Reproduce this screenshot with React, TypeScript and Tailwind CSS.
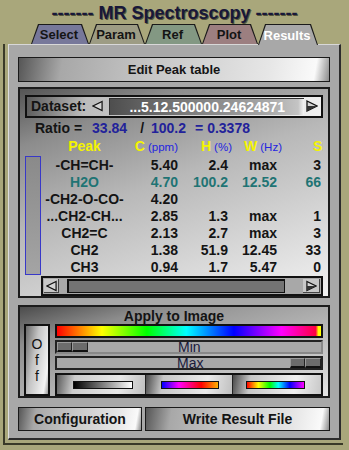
import React from "react";

const FONT = "font-['Liberation_Sans',Arial,sans-serif]";
const BEVEL =
  "bg-[linear-gradient(100deg,#565656_0%,#a8a8a8_14%,#c8c8c8_45%,#e6e6e6_80%,#fafafa_95%,#8a8a8a_100%)]";

function ArrowL({ w = 12 }: { w?: number }) {
  return (
    <svg width={w} height="12" viewBox="0 0 12 12">
      <polygon points="11,1 1,6 11,11" fill="#d4d4d4" stroke="#111" strokeWidth="1.3" strokeLinejoin="miter" />
    </svg>
  );
}
function ArrowR({ w = 12 }: { w?: number }) {
  return (
    <svg width={w} height="12" viewBox="0 0 12 12">
      <polygon points="1,1 11,6 1,11" fill="#d4d4d4" stroke="#111" strokeWidth="1.3" />
      <polygon points="1,6 11,6 1,11" fill="#333" />
    </svg>
  );
}

type Tab = { label: string; w: string; bg: string; active?: boolean };
const tabs: Tab[] = [
  { label: "Select", w: "w-[58px]", bg: "bg-[#77789a]" },
  { label: "Param", w: "w-[56px]", bg: "bg-[#9d9c84]" },
  { label: "Ref", w: "w-[57px]", bg: "bg-[#839883]" },
  { label: "Plot", w: "w-[56px]", bg: "bg-[#9c7f80]" },
  { label: "Results", w: "w-[60px]", bg: "bg-[#a8a8a8]", active: true },
];

const rows = [
  { n: "-CH=CH-", c: "5.40", h: "2.4", w: "max", s: "3" },
  { n: "H2O", c: "4.70", h: "100.2", w: "12.52", s: "66", teal: true },
  { n: "-CH2-O-CO-", c: "4.20", h: "", w: "", s: "" },
  { n: "...CH2-CH...", c: "2.85", h: "1.3", w: "max", s: "1" },
  { n: "CH2=C", c: "2.13", h: "2.7", w: "max", s: "3" },
  { n: "CH2", c: "1.38", h: "51.9", w: "12.45", s: "33" },
  { n: "CH3", c: "0.94", h: "1.7", w: "5.47", s: "0" },
];

function Thumb() {
  return (
    <div className="flex h-full">
      <div className="w-[15px] h-full bg-[#6c6c6c] border-t border-l border-t-[#9a9a9a] border-l-[#9a9a9a] border-b-2 border-r border-b-[#111] border-r-[#222]" />
      <div className="w-[16px] h-full bg-[#6c6c6c] border-t border-l border-t-[#9a9a9a] border-l-[#9a9a9a] border-b-2 border-r border-b-[#111] border-r-[#222]" />
    </div>
  );
}

export default function App() {
  return (
    <div className={`${FONT} w-[349px] h-[450px] bg-[#a9a77b] overflow-hidden`}>
      {/* title */}
      <div className="h-[24px] flex items-center justify-center pt-[2px]">
        <span className="text-[18px] font-bold text-[#18183a] leading-none [text-shadow:1px_1px_0_#55553a]">
          ------- MR Spectroscopy -------
        </span>
      </div>
      {/* tabs */}
      <div className="h-[20px] flex items-end pl-[31px] relative z-10">
        {tabs.map((t) => (
          <div
            key={t.label}
            className={`${t.w} h-[20px] ${t.active ? "h-[21px] -mb-[1px]" : ""} bg-[#1a1a1a] pt-[1px] px-[1px] [clip-path:polygon(7px_0,calc(100%-7px)_0,100%_100%,0_100%)]`}
          >
            <div
              className={`h-full ${t.bg} [clip-path:polygon(7px_0,calc(100%-7px)_0,100%_100%,0_100%)] flex items-center justify-center pl-[2px] pr-[4px]`}
            >
              <span
                className={`text-[13px] font-bold leading-none ${t.active ? "text-white" : "text-[#141414]"}`}
              >
                {t.label}
              </span>
            </div>
          </div>
        ))}
      </div>
      {/* frame */}
      <div className="ml-[3px] w-[340px] border-l-2 border-b-2 border-[#3a3a28] pl-[3px] pb-[3px]">
        <div className="w-[333px] h-[396px] bg-[#a8a8a8] border-t border-l border-t-[#d8d8d8] border-l-[#dcdcdc] border-r-2 border-b-2 border-r-[#2c2c2c] border-b-[#2c2c2c] pl-[9px] pt-[12px]">
          <div className="w-[312px] flex flex-col">
            {/* Edit Peak table */}
            <div
              className={`h-[25px] ${BEVEL} border border-[#1a1a1a] flex items-center justify-center text-[13px] font-bold text-[#141414]`}
            >
              Edit Peak table
            </div>

            {/* dataset panel */}
            <div className="mt-[5px] h-[211px] border-2 border-[#1c1c1c] bg-[linear-gradient(160deg,#555_0%,#8c8c8c_18%,#b8b8b8_45%,#d8d8d8_75%,#f2f2f2_100%)] px-[5px] pt-[6px] flex flex-col">
              <div className="h-[23px] border-2 border-[#111] bg-[linear-gradient(100deg,#5a5a5a_0%,#bcbcbc_20%,#d6d6d6_60%,#f0f0f0_100%)] flex items-center">
                <span className="ml-[4px] text-[14px] font-bold text-[#141414] leading-none">Dataset:</span>
                <span className="ml-[6px] flex items-center">
                  <ArrowL w={11} />
                </span>
                <div className="ml-[6px] w-[195px] h-[17px] bg-[linear-gradient(90deg,#4e4e4e_0%,#7c7c7c_40%,#a6a6a6_80%,#c4c4c4_97%,#f4f4f4_100%)] border-t border-l border-[#333] flex items-center justify-center">
                  <span className="text-[14px] font-bold text-white leading-none">...5.12.500000.24624871</span>
                </div>
                <span className="ml-[2px] flex items-center">
                  <ArrowR w={12} />
                </span>
              </div>

              {/* ratio */}
              <div className="h-[19px] flex items-center text-[14px] font-bold leading-none mt-[1px]">
                <span className="ml-[10px] text-[#141414]">Ratio =</span>
                <span className="ml-[10px] text-[#22229a]">33.84</span>
                <span className="ml-[13px] text-[#141414]">/</span>
                <span className="ml-[7px] text-[#22229a]">100.2</span>
                <span className="ml-[9px] text-[#22229a]">= 0.3378</span>
              </div>

              {/* header */}
              <div className="h-[18px] flex items-center ml-[16px] overflow-hidden leading-none">
                <div className="w-[87px] shrink-0 text-center text-[14px] font-bold text-[#f4f400]">Peak</div>
                <div className="w-[50px] shrink-0 text-right whitespace-nowrap">
                  <span className="text-[14px] font-bold text-[#f4f400]">C</span>
                  <span className="ml-[3px] text-[11.5px] text-[#2424e0]">(ppm)</span>
                </div>
                <div className="w-[54px] shrink-0 text-right whitespace-nowrap">
                  <span className="text-[14px] font-bold text-[#f4f400]">H</span>
                  <span className="ml-[3px] text-[11.5px] text-[#2424e0]">(%)</span>
                </div>
                <div className="w-[50px] shrink-0 text-right whitespace-nowrap">
                  <span className="text-[14px] font-bold text-[#f4f400]">W</span>
                  <span className="ml-[3px] text-[11.5px] text-[#2424e0]">(Hz)</span>
                </div>
                <div className="shrink-0 pl-[31px] text-[14px] font-bold text-[#f4f400] whitespace-nowrap">Si</div>
              </div>

              {/* body */}
              <div className="flex mt-[1px]">
                <div className="w-[16px] h-[119px] border border-[#3838c8] bg-[linear-gradient(180deg,#8a8a8a,#a4a4a4)]" />
                <div className="flex flex-col">
                  {rows.map((r) => (
                    <div
                      key={r.n}
                      className={`h-[17px] flex items-center text-[14px] font-bold leading-none ${r.teal ? "text-[#1f7474]" : "text-[#141414]"}`}
                    >
                      <div className="w-[87px] text-center whitespace-nowrap">{r.n}</div>
                      <div className="w-[50px] text-right">{r.c}</div>
                      <div className="w-[50px] text-right">{r.h}</div>
                      <div className="w-[49px] text-right">{r.w}</div>
                      <div className="w-[44px] text-right">{r.s}</div>
                    </div>
                  ))}
                </div>
              </div>

              {/* h scroll */}
              <div className="ml-[16px] mt-[1px] w-[282px] h-[20px] border-2 border-[#111] bg-[#a8a8a8] flex items-center px-[1px]">
                <div className="w-[15px] h-[14px] bg-[#c8c8c8] border-b border-r border-[#444] flex items-center justify-center">
                  <ArrowL w={11} />
                </div>
                <div className="ml-[8px] w-[218px] h-[14px] bg-[#737373] border-t-2 border-l-2 border-[#111] border-b border-r border-b-[#111] border-r-[#111]" />
                <div className="ml-auto w-[17px] h-[14px] bg-[#c8c8c8] border-b border-r border-[#444] flex items-center justify-center">
                  <ArrowR w={11} />
                </div>
              </div>
            </div>

            {/* apply to image */}
            <div className="mt-[7px] h-[93px] border-2 border-[#1c1c1c] bg-[linear-gradient(165deg,#4c4c4c_0%,#8c8c8c_22%,#b2b2b2_55%,#d2d2d2_85%,#e6e6e6_100%)] flex flex-col">
              <div className="h-[16px] flex items-center justify-center text-[14px] font-bold text-[#141414] leading-none pt-[2px]">
                Apply to Image
              </div>
              <div className="flex pl-[4px] pt-[1px]">
                <div className="w-[26px] h-[72px] border-2 border-[#111] bg-[linear-gradient(100deg,#6a6a6a_0%,#c4c4c4_40%,#f4f4f4_85%,#9a9a9a_100%)] flex flex-col items-center justify-center text-[14px] text-[#111] leading-[16px]">
                  <span>O</span>
                  <span>f</span>
                  <span>f</span>
                </div>
                <div className="ml-[5px] w-[268px] flex flex-col">
                  <div className="h-[14px] border-2 border-[#111] bg-[linear-gradient(90deg,#ff0000_0%,#ffff00_17%,#00ff00_34%,#00ffff_49%,#0000ff_67%,#ff00ff_85%,#ff0040_98%,#ffff00_99%)]" />
                  <div className="mt-[2px] h-[14px] border-2 border-t-[#222] border-l-[#222] border-b-[#888] border-r-[#888] bg-[#a8a8a8] relative flex items-center">
                    <Thumb />
                    <span className="absolute left-[121px] top-[-2px] text-[14px] text-[#1a1a3c] leading-[14px]">Min</span>
                  </div>
                  <div className="mt-[2px] h-[14px] border-2 border-t-[#222] border-l-[#222] border-b-[#222] border-r-[#222] bg-[#a8a8a8] relative flex items-center justify-end">
                    <span className="absolute left-[120px] top-[-2px] text-[14px] text-[#1a1a3c] leading-[14px]">Max</span>
                    <Thumb />
                  </div>
                  <div className="mt-[3px] h-[23px] border-2 border-[#111] flex bg-[#333]">
                    <div className="w-[89px] h-full bg-[linear-gradient(100deg,#5a5a5a_0%,#cccccc_20%,#e8e8e8_70%,#c0c0c0_100%)] flex items-center justify-center border-r border-[#222]">
                      <div className="w-[60px] h-[8px] border border-[#111] bg-[linear-gradient(90deg,#000,#fff)] ml-[3px]" />
                    </div>
                    <div className="w-[87px] h-full bg-[linear-gradient(100deg,#4a4a4a_0%,#c8c8c8_20%,#eaeaea_70%,#c0c0c0_100%)] flex items-center justify-center border-r border-[#222]">
                      <div className="w-[58px] h-[8px] border border-[#111] bg-[linear-gradient(90deg,#0000ff,#ff00ff_30%,#ff0000_70%,#ffb000)] ml-[2px]" />
                    </div>
                    <div className="flex-1 h-full bg-[linear-gradient(100deg,#4a4a4a_0%,#c8c8c8_20%,#f0f0f0_70%,#c8c8c8_100%)] flex items-center justify-center">
                      <div className="w-[59px] h-[8px] border border-[#111] bg-[linear-gradient(90deg,#ff0000,#ffff00_20%,#00ff00_40%,#00ffff_55%,#0000ff_75%,#ff00ff)] mr-[4px]" />
                    </div>
                  </div>
                </div>
              </div>
            </div>

            {/* bottom buttons */}
            <div className="mt-[9px] flex gap-[3px]">
              <div className={`w-[124px] h-[24px] ${BEVEL} border border-[#1a1a1a] flex items-center justify-center text-[14px] font-bold text-[#141414]`}>
                Configuration
              </div>
              <div className={`w-[185px] h-[24px] ${BEVEL} border border-[#1a1a1a] flex items-center justify-center text-[14px] font-bold text-[#141414]`}>
                Write Result File
              </div>
            </div>
          </div>
        </div>
      </div>
    </div>
  );
}
